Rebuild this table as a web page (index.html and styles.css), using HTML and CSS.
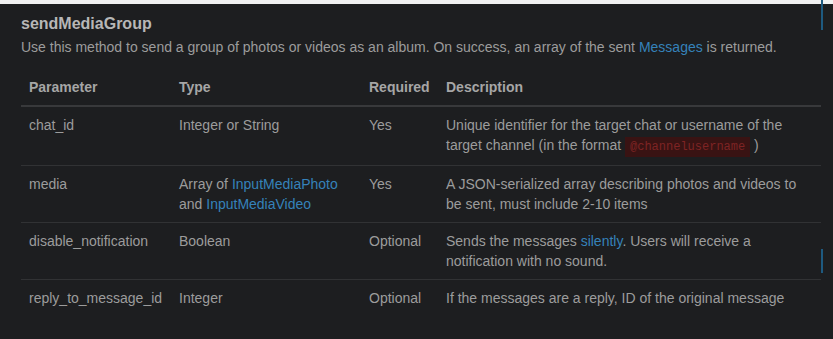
FILE: index.html
```html
<!DOCTYPE html>
<html>

<head>
    <title>sendMediaGroup</title>
    <link rel="stylesheet" href="styles.css">
</head>

<body>
    <div class="topbar"></div>

    <div class="page">
        <h4>sendMediaGroup</h4>
        <p>Use this method to send a group of photos or videos as an album. On success, an array of the sent <a href="#">Messages</a> is returned.</p>

        <table>
            <thead>
                <tr>
                    <th class="col-param">Parameter</th>
                    <th class="col-type">Type</th>
                    <th class="col-req">Required</th>
                    <th>Description</th>
                </tr>
            </thead>
            <tbody>
                <tr>
                    <td>chat_id</td>
                    <td>Integer or String</td>
                    <td>Yes</td>
                    <td>Unique identifier for the target chat or username of the target channel (in the format <code>@channelusername</code> )</td>
                </tr>
                <tr>
                    <td>media</td>
                    <td>Array of <a href="#">InputMediaPhoto</a> and <a href="#">InputMediaVideo</a></td>
                    <td>Yes</td>
                    <td>A JSON-serialized array describing photos and videos to be sent, must include 2-10 items</td>
                </tr>
                <tr>
                    <td>disable_notification</td>
                    <td>Boolean</td>
                    <td>Optional</td>
                    <td>Sends the messages <a href="#">silently</a>. Users will receive a notification with no sound.</td>
                </tr>
                <tr>
                    <td>reply_to_message_id</td>
                    <td>Integer</td>
                    <td>Optional</td>
                    <td>If the messages are a reply, ID of the original message</td>
                </tr>
            </tbody>
        </table>

        <!-- scroll markers on the right edge -->
        <div class="marker marker-top"></div>
        <div class="marker marker-bottom"></div>
    </div>
</body>

</html>
```

FILE: styles.css
```css
html,
body {
    margin: 0;
    padding: 0;
    background-color: #1d1e20;
}

body {
    font-family: "Liberation Sans", Arial, sans-serif;
    font-size: 14px;
    line-height: 20px;
    color: #9c9c9c;
    height: 339px;
    overflow: hidden;
}

.topbar {
    height: 4px;
    background-color: #f1f1f1;
}

.page {
    position: relative;
    padding: 0 12px 0 21px;
}

h4 {
    margin: 0;
    padding-top: 10px;
    font-size: 16px;
    line-height: 20px;
    font-weight: bold;
    color: #b7b7b7;
}

p {
    margin: 3px 0 12px 0;
}

a {
    color: #3582ba;
    text-decoration: none;
}

table {
    width: 800px;
    border-collapse: collapse;
}

th,
td {
    text-align: left;
    vertical-align: top;
    padding: 8px;
}

th {
    font-weight: bold;
    color: #a6a6a6;
    border-bottom: 2px solid #38393b;
}

td {
    border-top: 1px solid #313234;
}

tbody tr:first-child td {
    border-top: none;
}

.col-param {
    width: 134px;
}

.col-type {
    width: 174px;
}

.col-req {
    width: 61px;
}

code {
    font-family: "Liberation Mono", "Courier New", monospace;
    font-size: 12px;
    color: #7e2424;
    background-color: #391313;
    padding: 3px 5px;
}

.marker {
    position: absolute;
    left: 821px;
    width: 2px;
    background-color: #1e5a80;
}

.marker-top {
    top: -4px;
    height: 30px;
}

.marker-bottom {
    top: 245px;
    height: 24px;
}
```
